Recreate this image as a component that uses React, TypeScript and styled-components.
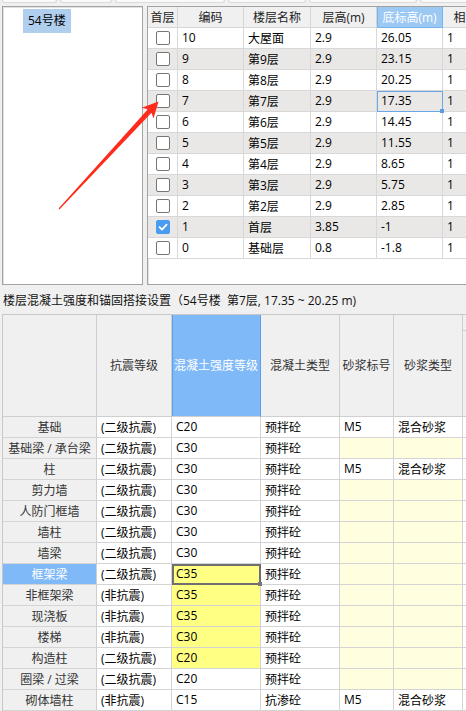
import React from "react";
import styled, { createGlobalStyle, css } from "styled-components";

const Global = createGlobalStyle`
  html, body { margin: 0; padding: 0; background: #f0f0f0; }
  body { font-family: "Open Sans", "Noto Sans CJK SC", sans-serif; font-size: 12px; color: #000; }
  * { box-sizing: border-box; }
`;

const Page = styled.div`
  position: relative;
  width: 466px;
  height: 711px;
  overflow: hidden;
  background: #f0f0f0;
  display: flex;
  flex-direction: column;
`;

const ToolStrip = styled.div`
  height: 6px;
  display: flex;
  gap: 3px;
  padding-left: 2px;
  overflow: hidden;
`;

const ToolBox = styled.div<{ $w: number }>`
  width: ${(p) => p.$w}px;
  height: 3px;
  background: #fafafa;
  border: 1px solid #dadada;
  border-top: none;
  border-radius: 0 0 3px 3px;
  flex-shrink: 0;
`;

const TopArea = styled.div`
  height: 282px;
  display: flex;
  gap: 4px;
  padding-left: 2px;
`;

const Panel = styled.div`
  background: #fff;
  border: 1px solid #a3a3a3;
  box-shadow: inset 1px 1px 0 #e2e2e2;
  overflow: hidden;
`;

const TreePanel = styled(Panel)`
  width: 141px;
  flex-shrink: 0;
  padding: 2px 0 0 20px;
`;

const TreeItem = styled.div`
  display: inline-block;
  height: 24px;
  line-height: 24px;
  padding: 0 5px;
  background: #b0cfef;
  font-size: 12px;
`;

const FloorPanel = styled(Panel)`
  flex: 1;
  min-width: 0;
  border-right: none;
`;

const FloorGrid = styled.div`
  display: grid;
  grid-template-columns: 30px 66px 67px 66px 66px 70px;
  grid-auto-rows: 21px;
  width: max-content;
`;

const HeadCell = styled.div<{ $active?: boolean }>`
  display: flex;
  align-items: center;
  justify-content: center;
  background: #f0f0f0;
  color: #222;
  border-right: 1px solid #d6d6d6;
  border-bottom: 1px solid #d6d6d6;
  white-space: nowrap;
  overflow: hidden;
  ${(p) =>
    p.$active &&
    css`
      background: #9cc8f4;
      color: #fff;
      border-right-color: #78b2ee;
      border-bottom-color: #78b2ee;
      box-shadow: inset 1px 0 0 #78b2ee;
    `}
`;

const Cell = styled.div<{ $alt?: boolean; $sel?: boolean }>`
  position: relative;
  display: flex;
  align-items: center;
  padding-left: 4px;
  background: ${(p) => (p.$alt ? "#e9e8e6" : "#fff")};
  border-right: 1px solid #d8d8d8;
  border-bottom: 1px solid #d8d8d8;
  white-space: nowrap;
  overflow: hidden;
  ${(p) =>
    p.$sel &&
    css`
      overflow: visible;
      outline: 1px solid #6aa6e8;
      outline-offset: -1px;
      z-index: 1;
    `}
`;

const CheckCell = styled(Cell)`
  justify-content: center;
  padding-left: 0;
`;

const Box = styled.div<{ $on?: boolean }>`
  width: 14px;
  height: 14px;
  border-radius: 2px;
  border: 1px solid ${(p) => (p.$on ? "#4a9cf0" : "#767676")};
  background: ${(p) => (p.$on ? "#4a9cf0" : "#fff")};
  display: flex;
  align-items: center;
  justify-content: center;
`;

const Handle = styled.div<{ $c: string }>`
  position: absolute;
  right: -2px;
  bottom: -2px;
  width: 4px;
  height: 4px;
  background: ${(p) => p.$c};
`;

const Title = styled.div`
  height: 29px;
  display: flex;
  align-items: center;
  padding-left: 3px;
  font-size: 12px;
  white-space: pre;
  color: #111;
`;

const SetGrid = styled.div`
  margin-left: 2px;
  display: grid;
  grid-template-columns: 94px 75px 89px 79px 54px 69px 60px;
  grid-template-rows: 102px;
  grid-auto-rows: 21px;
  width: max-content;
  border-top: 1px solid #c8c8c8;
  border-left: 1px solid #c8c8c8;
`;

const SHead = styled.div<{ $active?: boolean }>`
  position: relative;
  display: flex;
  align-items: center;
  justify-content: center;
  background: #f0f0f0;
  color: #333;
  border-right: 1px solid #cfcfcf;
  border-bottom: 1px solid #cfcfcf;
  white-space: nowrap;
  overflow: hidden;
  ${(p) =>
    p.$active &&
    css`
      background: #80b9f7;
      color: #fff;
      box-shadow: inset 1px 0 0 #5e9ee8;
      border-right-color: #5e9ee8;
    `}
`;

const SubLine = styled.div`
  position: absolute;
  left: 0;
  right: 0;
  top: 15px;
  border-top: 1px solid #cfcfcf;
`;

const RowLabel = styled.div<{ $active?: boolean }>`
  display: flex;
  align-items: center;
  justify-content: center;
  background: ${(p) => (p.$active ? "#80b9f7" : "#f0f0f0")};
  color: ${(p) => (p.$active ? "#fff" : "#333")};
  border-right: 1px solid #cfcfcf;
  border-bottom: 1px solid #d4d4d4;
  white-space: nowrap;
  overflow: hidden;
`;

const SCell = styled.div<{ $bg?: "white" | "yellow" | "pale"; $sel?: boolean }>`
  position: relative;
  display: flex;
  align-items: center;
  padding-left: 4px;
  background: ${(p) =>
    p.$bg === "yellow" ? "#ffff84" : p.$bg === "pale" ? "#ffffdf" : "#fff"};
  border-right: 1px solid #d4d4d4;
  border-bottom: 1px solid #d4d4d4;
  white-space: nowrap;
  overflow: hidden;
  ${(p) =>
    p.$sel &&
    css`
      overflow: visible;
      outline: 2px solid #6f6f6f;
      outline-offset: -2px;
      z-index: 1;
    `}
`;

const ArrowLayer = styled.svg`
  position: absolute;
  left: 0;
  top: 0;
  pointer-events: none;
`;

type Floor = { code: string; name: string; h: string; base: string; first?: boolean };

const floors: Floor[] = [
  { code: "10", name: "大屋面", h: "2.9", base: "26.05" },
  { code: "9", name: "第9层", h: "2.9", base: "23.15" },
  { code: "8", name: "第8层", h: "2.9", base: "20.25" },
  { code: "7", name: "第7层", h: "2.9", base: "17.35" },
  { code: "6", name: "第6层", h: "2.9", base: "14.45" },
  { code: "5", name: "第5层", h: "2.9", base: "11.55" },
  { code: "4", name: "第4层", h: "2.9", base: "8.65" },
  { code: "3", name: "第3层", h: "2.9", base: "5.75" },
  { code: "2", name: "第2层", h: "2.9", base: "2.85" },
  { code: "1", name: "首层", h: "3.85", base: "-1", first: true },
  { code: "0", name: "基础层", h: "0.8", base: "-1.8" },
];

type Member = { label: string; seis: string; grade: string; yellow?: boolean; kind: string; mortar?: string; mtype?: string };

const members: Member[] = [
  { label: "基础", seis: "(二级抗震)", grade: "C20", kind: "预拌砼", mortar: "M5", mtype: "混合砂浆" },
  { label: "基础梁 / 承台梁", seis: "(二级抗震)", grade: "C30", kind: "预拌砼" },
  { label: "柱", seis: "(二级抗震)", grade: "C30", kind: "预拌砼", mortar: "M5", mtype: "混合砂浆" },
  { label: "剪力墙", seis: "(二级抗震)", grade: "C30", kind: "预拌砼" },
  { label: "人防门框墙", seis: "(二级抗震)", grade: "C30", kind: "预拌砼" },
  { label: "墙柱", seis: "(二级抗震)", grade: "C30", kind: "预拌砼" },
  { label: "墙梁", seis: "(二级抗震)", grade: "C30", kind: "预拌砼" },
  { label: "框架梁", seis: "(二级抗震)", grade: "C35", yellow: true, kind: "预拌砼" },
  { label: "非框架梁", seis: "(非抗震)", grade: "C35", yellow: true, kind: "预拌砼" },
  { label: "现浇板", seis: "(非抗震)", grade: "C35", yellow: true, kind: "预拌砼" },
  { label: "楼梯", seis: "(非抗震)", grade: "C30", yellow: true, kind: "预拌砼" },
  { label: "构造柱", seis: "(二级抗震)", grade: "C20", yellow: true, kind: "预拌砼" },
  { label: "圈梁 / 过梁", seis: "(二级抗震)", grade: "C20", kind: "预拌砼" },
  { label: "砌体墙柱", seis: "(非抗震)", grade: "C15", kind: "抗渗砼", mortar: "M5", mtype: "混合砂浆" },
];

const Check = () => (
  <svg width="10" height="10" viewBox="0 0 10 10">
    <path d="M1.5 5.2 L4 7.6 L8.6 2.6" fill="none" stroke="#fff" strokeWidth="1.8" strokeLinecap="round" strokeLinejoin="round" />
  </svg>
);

export default function App() {
  return (
    <>
      <Global />
      <Page>
        <ToolStrip>
          {[55, 52, 110, 78, 108, 60].map((w, i) => (
            <ToolBox key={i} $w={w} />
          ))}
        </ToolStrip>
        <TopArea>
          <TreePanel>
            <TreeItem>54号楼</TreeItem>
          </TreePanel>
          <FloorPanel>
            <FloorGrid>
              <HeadCell>首层</HeadCell>
              <HeadCell>编码</HeadCell>
              <HeadCell>楼层名称</HeadCell>
              <HeadCell>层高(m)</HeadCell>
              <HeadCell $active>底标高(m)</HeadCell>
              <HeadCell>相同层数</HeadCell>
              {floors.map((f, i) => {
                const alt = i % 2 === 1;
                const sel = f.code === "7";
                return (
                  <React.Fragment key={f.code}>
                    <CheckCell $alt={alt}>
                      <Box $on={f.first}>{f.first && <Check />}</Box>
                    </CheckCell>
                    <Cell $alt={alt}>{f.code}</Cell>
                    <Cell $alt={alt}>{f.name}</Cell>
                    <Cell $alt={alt}>{f.h}</Cell>
                    <Cell $alt={alt} $sel={sel}>
                      {f.base}
                      {sel && <Handle $c="#5d9be0" />}
                    </Cell>
                    <Cell $alt={alt}>1</Cell>
                  </React.Fragment>
                );
              })}
            </FloorGrid>
          </FloorPanel>
        </TopArea>
        <Title>楼层混凝土强度和锚固搭接设置（54号楼  第7层, 17.35 ~ 20.25 m)</Title>
        <SetGrid>
          <SHead />
          <SHead>抗震等级</SHead>
          <SHead $active>混凝土强度等级</SHead>
          <SHead>混凝土类型</SHead>
          <SHead>砂浆标号</SHead>
          <SHead>砂浆类型</SHead>
          <SHead>
            <SubLine />
          </SHead>
          {members.map((m) => {
            const sel = m.label === "框架梁";
            return (
              <React.Fragment key={m.label}>
                <RowLabel $active={sel}>{m.label}</RowLabel>
                <SCell>{m.seis}</SCell>
                <SCell $bg={m.yellow ? "yellow" : "white"} $sel={sel}>
                  {m.grade}
                  {sel && <Handle $c="#777" />}
                </SCell>
                <SCell>{m.kind}</SCell>
                <SCell $bg={m.mortar ? "white" : "pale"}>{m.mortar}</SCell>
                <SCell $bg={m.mtype ? "white" : "pale"}>{m.mtype}</SCell>
                <SCell />
              </React.Fragment>
            );
          })}
        </SetGrid>
        <ArrowLayer width="466" height="711" viewBox="0 0 466 711">
          <polygon
            points="58.6,208.6 147.9,109.3 141.7,107.8 158.5,101.5 153.5,118.6 151.5,112.7 59.4,209.4"
            fill="#ff2b1c"
          />
        </ArrowLayer>
      </Page>
    </>
  );
}
